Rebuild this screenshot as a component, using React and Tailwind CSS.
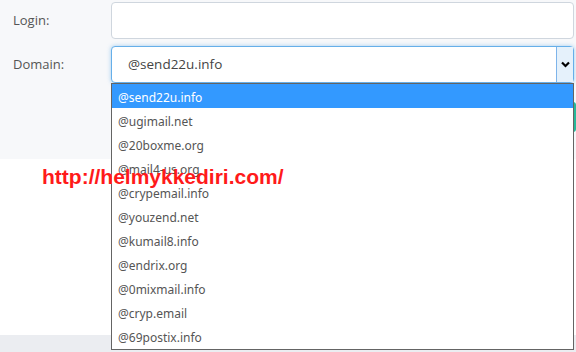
const domains = [
  '@send22u.info',
  '@ugimail.net',
  '@20boxme.org',
  '@mail4-us.org',
  '@crypemail.info',
  '@youzend.net',
  '@kumail8.info',
  '@endrix.org',
  '@0mixmail.info',
  '@cryp.email',
  '@69postix.info',
]

export default function App() {
  return (
    <div className="relative w-[576px] h-[352px] overflow-hidden bg-white flex flex-col font-['Open_Sans',sans-serif] text-[#555]">
      <div className="bg-[#f7f8fa] h-[159px] pt-[2px] flex flex-col">
        <div className="flex items-center">
          <label className="w-[111px] pl-[13px] text-[13px]">Login:</label>
          <div className="flex-1 mr-[2px] h-[37px] bg-white border border-[#cfd6de] rounded-[4px]" />
        </div>
        <div className="flex items-center mt-[7px]">
          <label className="w-[111px] pl-[13px] text-[13px]">Domain:</label>
          <div className="flex-1 mr-[2px] h-[37px] bg-white border border-[#66afe9] rounded-[4px] shadow-[0_0_4px_rgba(102,175,233,0.6)] flex items-stretch">
            <span className="flex-1 pl-[16px] flex items-center text-[13.5px] text-[#444]">@send22u.info</span>
            <span className="w-[17px] bg-[#e5f1fb] border-l border-[#7eb4ea] flex items-center justify-center">
              <svg width="9" height="7" viewBox="0 0 9 7">
                <polyline points="1,1.5 4.5,5 8,1.5" fill="none" stroke="#000" strokeWidth="2.2" />
              </svg>
            </span>
          </div>
        </div>
        <div className="flex justify-end mt-[19px]">
          <div className="w-[90px] h-[30px] rounded-[3px] bg-[#26b99a]" />
        </div>
      </div>
      <div className="flex-1" />
      <div className="h-[17px] bg-[#ebedf1]" />

      <ul className="absolute left-[111px] top-[83px] w-[463px] h-[267px] bg-white border border-[#646464] font-['Noto_Sans',sans-serif] text-[12px] text-[#555]">
        {domains.map((d, i) => (
          <li
            key={d}
            className={
              i === 0
                ? 'h-[24px] pl-[6px] pt-[3px] flex items-center bg-[#3399ff] text-white'
                : 'h-[24px] pl-[6px] pt-[3px] flex items-center'
            }
          >
            {d}
          </li>
        ))}
      </ul>

      <div className="absolute left-[42px] top-[161px] font-['Liberation_Sans',Arial,sans-serif] font-bold text-[21px] text-[#ff1a1a]">
        http://helmykkediri.com/
      </div>
    </div>
  )
}
